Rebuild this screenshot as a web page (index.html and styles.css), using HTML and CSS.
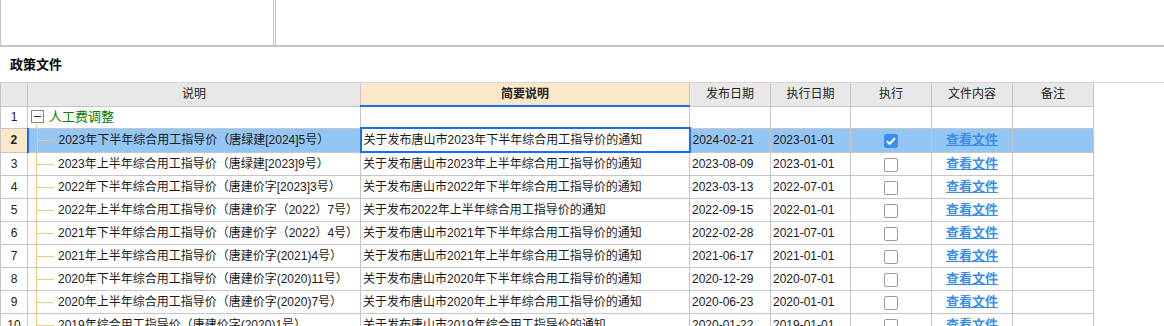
FILE: index.html
```html
<!DOCTYPE html>
<html lang="zh-CN">

<head>
    <meta charset="UTF-8">
    <meta name="viewport" content="width=device-width, initial-scale=1.0">
    <title>政策文件</title>
    <link rel="stylesheet" href="styles.css">
</head>

<body>
    <div class="toolbar">
        <div class="pane pane-left"></div>
        <div class="pane pane-right"></div>
    </div>

    <div class="section-title">政策文件</div>

    <div class="grid">
        <table>
            <colgroup>
                <col style="width: 27px">
                <col style="width: 333px">
                <col style="width: 329px">
                <col style="width: 81px">
                <col style="width: 80px">
                <col style="width: 81px">
                <col style="width: 81px">
                <col style="width: 81px">
            </colgroup>
            <thead>
                <tr>
                    <th></th>
                    <th>说明</th>
                    <th class="focus-col">简要说明</th>
                    <th>发布日期</th>
                    <th>执行日期</th>
                    <th>执行</th>
                    <th>文件内容</th>
                    <th>备注</th>
                </tr>
            </thead>
            <tbody>
                <tr class="group-row">
                    <td class="num">1</td>
                    <td class="tree group"><span class="toggle"></span><span class="group-name">人工费调整</span></td>
                    <td></td>
                    <td></td>
                    <td></td>
                    <td></td>
                    <td></td>
                    <td></td>
                </tr>
                <tr class="selected">
                    <td class="num current">2</td>
                    <td class="tree child">2023年下半年综合用工指导价（唐绿建[2024]5号）</td>
                    <td class="editing">关于发布唐山市2023年下半年综合用工指导价的通知</td>
                    <td class="date">2024-02-21</td>
                    <td class="date">2023-01-01</td>
                    <td class="check"><span class="box checked"><svg width="10" height="8" viewBox="0 0 10 8"><path d="M1 4.2 L3.8 6.8 L9 1.2" fill="none" stroke="#fff" stroke-width="2"/></svg></span></td>
                    <td class="link"><a href="#">查看文件</a></td>
                    <td></td>
                </tr>
                <tr>
                    <td class="num">3</td>
                    <td class="tree child">2023年上半年综合用工指导价（唐绿建[2023]9号）</td>
                    <td>关于发布唐山市2023年上半年综合用工指导价的通知</td>
                    <td class="date">2023-08-09</td>
                    <td class="date">2023-01-01</td>
                    <td class="check"><span class="box"></span></td>
                    <td class="link"><a href="#">查看文件</a></td>
                    <td></td>
                </tr>
                <tr>
                    <td class="num">4</td>
                    <td class="tree child">2022年下半年综合用工指导价（唐建价字[2023]3号）</td>
                    <td>关于发布唐山市2022年下半年综合用工指导价的通知</td>
                    <td class="date">2023-03-13</td>
                    <td class="date">2022-07-01</td>
                    <td class="check"><span class="box"></span></td>
                    <td class="link"><a href="#">查看文件</a></td>
                    <td></td>
                </tr>
                <tr>
                    <td class="num">5</td>
                    <td class="tree child">2022年上半年综合用工指导价（唐建价字（2022）7号）</td>
                    <td>关于发布2022年上半年综合用工指导价的通知</td>
                    <td class="date">2022-09-15</td>
                    <td class="date">2022-01-01</td>
                    <td class="check"><span class="box"></span></td>
                    <td class="link"><a href="#">查看文件</a></td>
                    <td></td>
                </tr>
                <tr>
                    <td class="num">6</td>
                    <td class="tree child">2021年下半年综合用工指导价（唐建价字（2022）4号）</td>
                    <td>关于发布唐山市2021年下半年综合用工指导价的通知</td>
                    <td class="date">2022-02-28</td>
                    <td class="date">2021-07-01</td>
                    <td class="check"><span class="box"></span></td>
                    <td class="link"><a href="#">查看文件</a></td>
                    <td></td>
                </tr>
                <tr>
                    <td class="num">7</td>
                    <td class="tree child">2021年上半年综合用工指导价（唐建价字(2021)4号）</td>
                    <td>关于发布唐山市2021年上半年综合用工指导价的通知</td>
                    <td class="date">2021-06-17</td>
                    <td class="date">2021-01-01</td>
                    <td class="check"><span class="box"></span></td>
                    <td class="link"><a href="#">查看文件</a></td>
                    <td></td>
                </tr>
                <tr>
                    <td class="num">8</td>
                    <td class="tree child">2020年下半年综合用工指导价（唐建价字(2020)11号）</td>
                    <td>关于发布唐山市2020年下半年综合用工指导价的通知</td>
                    <td class="date">2020-12-29</td>
                    <td class="date">2020-07-01</td>
                    <td class="check"><span class="box"></span></td>
                    <td class="link"><a href="#">查看文件</a></td>
                    <td></td>
                </tr>
                <tr>
                    <td class="num">9</td>
                    <td class="tree child">2020年上半年综合用工指导价（唐建价字(2020)7号）</td>
                    <td>关于发布唐山市2020年上半年综合用工指导价的通知</td>
                    <td class="date">2020-06-23</td>
                    <td class="date">2020-01-01</td>
                    <td class="check"><span class="box"></span></td>
                    <td class="link"><a href="#">查看文件</a></td>
                    <td></td>
                </tr>
                <tr>
                    <td class="num">10</td>
                    <td class="tree child">2019年综合用工指导价（唐建价字(2020)1号）</td>
                    <td>关于发布唐山市2019年综合用工指导价的通知</td>
                    <td class="date">2020-01-22</td>
                    <td class="date">2019-01-01</td>
                    <td class="check"><span class="box"></span></td>
                    <td class="link"><a href="#">查看文件</a></td>
                    <td></td>
                </tr>
            </tbody>
        </table>
    </div>
</body>

</html>
```

FILE: styles.css
```css
body {
    margin: 0;
    font-family: "Liberation Sans", "Noto Sans CJK SC", sans-serif;
    font-size: 12px;
    color: #1a1a1a;
    background: #fff;
    overflow: hidden;
}

.toolbar {
    display: flex;
    height: 45px;
    border-bottom: 2px solid #c4c4c4;
}

.pane {
    height: 100%;
}

.pane-left {
    width: 272px;
    border-left: 1px solid #c4c4c4;
    border-right: 1px solid #c4c4c4;
}

.pane-right {
    flex: 1;
    margin-left: 1px;
    border-left: 1px solid #c4c4c4;
}

.section-title {
    height: 35px;
    line-height: 35px;
    padding-left: 10px;
    font-size: 13px;
    font-weight: bold;
    color: #000;
}

.grid {
    border-top: 1px solid #d6d6d6;
}

table {
    border-collapse: collapse;
    table-layout: fixed;
    width: 1093px;
}

th,
td {
    border: 1px solid #c6c6c6;
    padding: 0 2px;
    height: 22px;
    line-height: 20px;
    white-space: nowrap;
    overflow: hidden;
}

th {
    border-top: none;
    height: 22px;
    background: #e8e8e8;
    font-weight: normal;
    color: #222;
    text-align: center;
}

th.focus-col {
    background: #fde7cb;
    font-weight: bold;
    border-bottom: 2px solid #1a6fe8;
}

tr.group-row td {
    height: 20px;
}

td.num {
    text-align: center;
    padding: 0;
    color: #222;
}

td.num.current {
    background: #fde7cb;
    font-weight: bold;
    border-right: 2px solid #1a6fe8;
}

tr.selected td {
    background: #93c6f5;
}

tr.selected td.num {
    background: #fde7cb;
}

tr.selected td.editing {
    background: #fff;
    border: 2px solid #1a6fe8;
}

td.tree {
    position: relative;
}

td.group {
    padding-left: 3px;
}

.toggle {
    display: inline-block;
    width: 11px;
    height: 11px;
    border: 1px solid #8a8a8a;
    vertical-align: -2px;
    margin-right: 5px;
    position: relative;
}

.toggle::before {
    content: "";
    position: absolute;
    left: 2px;
    right: 2px;
    top: 5px;
    height: 1px;
    background: #333;
}

.group-name {
    color: #008000;
    font-size: 13px;
}

td.group::after {
    content: "";
    position: absolute;
    left: 8px;
    top: 17px;
    bottom: -1px;
    width: 1px;
    background: #f7c77a;
}

td.child {
    padding-left: 30px;
}

td.child::before {
    content: "";
    position: absolute;
    left: 8px;
    top: -1px;
    bottom: -1px;
    width: 1px;
    background: #f7c77a;
}

td.child::after {
    content: "";
    position: absolute;
    left: 9px;
    top: 11px;
    width: 17px;
    height: 1px;
    background: #f7c77a;
}

td.date {
    padding-left: 2px;
}

td.check {
    text-align: center;
    padding: 0;
}

.box {
    display: inline-flex;
    align-items: center;
    justify-content: center;
    box-sizing: border-box;
    width: 14px;
    height: 14px;
    border: 1px solid #9a9a9a;
    border-radius: 2px;
    background: #fff;
    vertical-align: middle;
}

.box.checked {
    background: #3c8ef0;
    border-color: #3c8ef0;
}

td.link {
    text-align: center;
}

td.link a {
    color: #3b8ee6;
    font-weight: bold;
    font-size: 13px;
    text-decoration: underline;
}
```
